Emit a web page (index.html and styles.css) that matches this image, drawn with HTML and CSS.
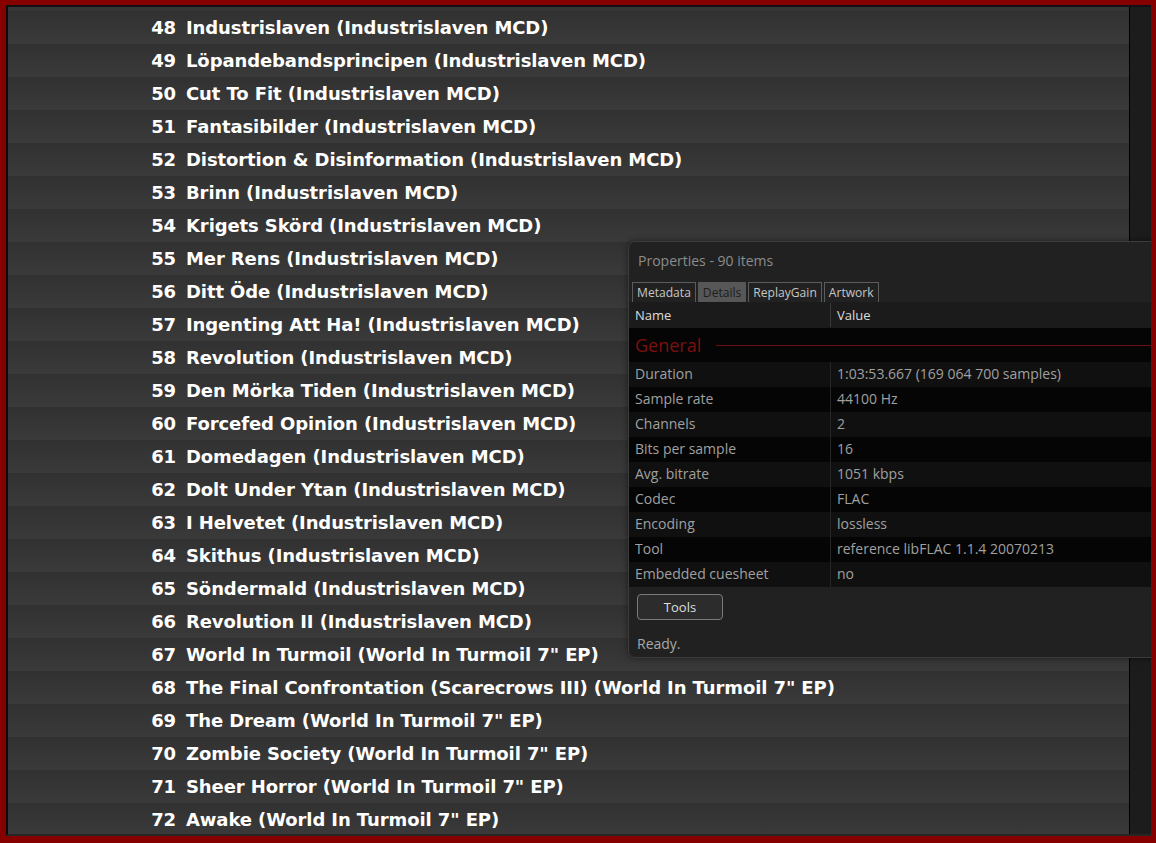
FILE: index.html
```html
<!DOCTYPE html>
<html lang="en">
<head>
    <meta charset="UTF-8">
    <title>Playlist</title>
    <link rel="stylesheet" href="styles.css">
</head>
<body>
    <div class="frame">
        <div class="playlist">
            <div class="track"><span class="num">48</span><span class="title">Industrislaven (Industrislaven MCD)</span></div>
            <div class="track"><span class="num">49</span><span class="title">Löpandebandsprincipen (Industrislaven MCD)</span></div>
            <div class="track"><span class="num">50</span><span class="title">Cut To Fit (Industrislaven MCD)</span></div>
            <div class="track"><span class="num">51</span><span class="title">Fantasibilder (Industrislaven MCD)</span></div>
            <div class="track"><span class="num">52</span><span class="title">Distortion &amp; Disinformation (Industrislaven MCD)</span></div>
            <div class="track"><span class="num">53</span><span class="title">Brinn (Industrislaven MCD)</span></div>
            <div class="track"><span class="num">54</span><span class="title">Krigets Skörd (Industrislaven MCD)</span></div>
            <div class="track"><span class="num">55</span><span class="title">Mer Rens (Industrislaven MCD)</span></div>
            <div class="track"><span class="num">56</span><span class="title">Ditt Öde (Industrislaven MCD)</span></div>
            <div class="track"><span class="num">57</span><span class="title">Ingenting Att Ha! (Industrislaven MCD)</span></div>
            <div class="track"><span class="num">58</span><span class="title">Revolution (Industrislaven MCD)</span></div>
            <div class="track"><span class="num">59</span><span class="title">Den Mörka Tiden (Industrislaven MCD)</span></div>
            <div class="track"><span class="num">60</span><span class="title">Forcefed Opinion (Industrislaven MCD)</span></div>
            <div class="track"><span class="num">61</span><span class="title">Domedagen (Industrislaven MCD)</span></div>
            <div class="track"><span class="num">62</span><span class="title">Dolt Under Ytan (Industrislaven MCD)</span></div>
            <div class="track"><span class="num">63</span><span class="title">I Helvetet (Industrislaven MCD)</span></div>
            <div class="track"><span class="num">64</span><span class="title">Skithus (Industrislaven MCD)</span></div>
            <div class="track"><span class="num">65</span><span class="title">Söndermald (Industrislaven MCD)</span></div>
            <div class="track"><span class="num">66</span><span class="title">Revolution II (Industrislaven MCD)</span></div>
            <div class="track"><span class="num">67</span><span class="title">World In Turmoil (World In Turmoil 7" EP)</span></div>
            <div class="track"><span class="num">68</span><span class="title">The Final Confrontation (Scarecrows III) (World In Turmoil 7" EP)</span></div>
            <div class="track"><span class="num">69</span><span class="title">The Dream (World In Turmoil 7" EP)</span></div>
            <div class="track"><span class="num">70</span><span class="title">Zombie Society (World In Turmoil 7" EP)</span></div>
            <div class="track"><span class="num">71</span><span class="title">Sheer Horror (World In Turmoil 7" EP)</span></div>
            <div class="track"><span class="num">72</span><span class="title">Awake (World In Turmoil 7" EP)</span></div>
        </div>
        <div class="scrollbar"></div>

        <div class="properties">
            <div class="prop-title">Properties - 90 items</div>
            <div class="tabs">
                <span class="tab">Metadata</span>
                <span class="tab active">Details</span>
                <span class="tab">ReplayGain</span>
                <span class="tab">Artwork</span>
            </div>
            <div class="prop-header">
                <div class="col-name">Name</div>
                <div class="col-value">Value</div>
            </div>
            <div class="prop-body">
                <div class="group"><span>General</span><div class="group-line"></div></div>
                <div class="prop-row"><div class="col-name">Duration</div><div class="col-value">1:03:53.667 (169 064 700 samples)</div></div>
                <div class="prop-row"><div class="col-name">Sample rate</div><div class="col-value">44100 Hz</div></div>
                <div class="prop-row"><div class="col-name">Channels</div><div class="col-value">2</div></div>
                <div class="prop-row"><div class="col-name">Bits per sample</div><div class="col-value">16</div></div>
                <div class="prop-row"><div class="col-name">Avg. bitrate</div><div class="col-value">1051 kbps</div></div>
                <div class="prop-row"><div class="col-name">Codec</div><div class="col-value">FLAC</div></div>
                <div class="prop-row"><div class="col-name">Encoding</div><div class="col-value">lossless</div></div>
                <div class="prop-row"><div class="col-name">Tool</div><div class="col-value">reference libFLAC 1.1.4 20070213</div></div>
                <div class="prop-row"><div class="col-name">Embedded cuesheet</div><div class="col-value">no</div></div>
            </div>
            <div class="prop-footer">
                <button class="btn">Tools</button>
                <div class="status">Ready.</div>
            </div>
        </div>
    </div>
</body>
</html>
```

FILE: styles.css
```css
* {
    margin: 0;
    padding: 0;
    box-sizing: border-box;
}

body {
    background-color: #860000;
    width: 1156px;
    height: 843px;
    overflow: hidden;
    padding: 5px 5px 7px 6px;
}

.frame {
    position: relative;
    display: flex;
    height: 831px;
    background: #1d1d1d;
    border-top: 2px solid #111;
    border-left: 2px solid #0c0c0c;
    border-bottom: 2px solid #262626;
    overflow: hidden;
}

/* Playlist */
.playlist {
    flex: 1;
    padding-top: 4px;
    overflow: hidden;
    background: #363636;
    border-right: 1px solid #000;
}

.track {
    display: flex;
    align-items: center;
    height: 33px;
    background: linear-gradient(#313131, #3a3a3a);
    color: #fff;
    font-family: "DejaVu Sans", sans-serif;
    font-weight: bold;
    font-size: 18px;
    letter-spacing: -0.1px;
    white-space: nowrap;
}

.track .num {
    width: 168px;
    text-align: right;
    margin-right: 10px;
}

.scrollbar {
    width: 21px;
    background: #1c1c1c;
}

/* Properties panel */
.properties {
    position: absolute;
    left: 620px;
    top: 234px;
    width: 560px;
    height: 417px;
    background: #212121;
    border: 1px solid #3c3c3c;
    border-radius: 7px;
    box-shadow: 0 0 6px rgba(0,0,0,0.5);
    font-family: "Open Sans", "Noto Sans", sans-serif;
    overflow: hidden;
}

.prop-title {
    color: #8c8c8c;
    font-size: 14px;
    padding: 9px 0 0 9px;
    height: 40px;
}

.tabs {
    display: flex;
    padding-left: 3px;
    height: 20px;
}

.tab {
    border: 1px solid #5c5c5c;
    border-bottom: none;
    margin-right: 2px;
    padding: 0 4px;
    font-size: 12.1px;
    line-height: 19px;
    color: #c6c6c6;
}

.tab.active {
    background: #575757;
    border-color: #575757;
    color: #1e1e1e;
}

.prop-header {
    display: flex;
    height: 26px;
    background: #1b1b1b;
    color: #dcdcdc;
    font-size: 13px;
    align-items: center;
}

.col-name {
    width: 202px;
    padding-left: 6px;
    border-right: 1px solid #3a3a3a;
    line-height: 24px;
}

.col-value {
    padding-left: 6px;
    line-height: 24px;
}

.prop-body {
    background: #050505;
    height: 259px;
}

.group {
    display: flex;
    align-items: center;
    height: 34px;
    padding-left: 6px;
    color: #7c1010;
    font-size: 18px;
}

.group-line {
    flex: 1;
    height: 1px;
    background: #6a1010;
    margin: 1px 0 0 15px;
}

.prop-row {
    display: flex;
    height: 25px;
    color: #a0a0a0;
    font-size: 14px;
}

.prop-row:nth-child(even) {
    background: #101010;
}

.prop-row .col-name {
    border-right-color: #262626;
}

.prop-footer {
    padding: 7px 0 0 8px;
}

.btn {
    display: block;
    width: 86px;
    height: 26px;
    background: #2c2c2c;
    border: 1px solid #7a7a7a;
    border-radius: 4px;
    color: #dedede;
    font-family: "Open Sans", "Noto Sans", sans-serif;
    font-size: 13px;
}

.status {
    margin-top: 14px;
    color: #a8a8a8;
    font-size: 14px;
}
```
